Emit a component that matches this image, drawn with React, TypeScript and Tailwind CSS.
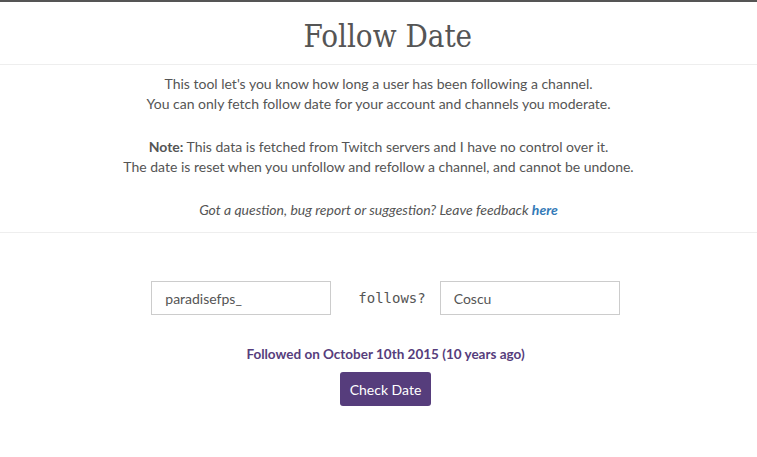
export default function App() {
  return (
    <div className="min-h-[457px] bg-white border-t-2 border-[#555] text-[#555]" style={{ fontFamily: "Lato, 'Open Sans', sans-serif" }}>
      <div className="h-[63px] flex items-center justify-center border-b border-[#eee] pl-[18px] pt-[11px]">
        <h1 className="text-[31px] leading-none text-[#555] pb-1" style={{ fontFamily: "'DejaVu Serif', serif", transform: "scaleX(0.9)" }}>Follow Date</h1>
      </div>
      <div className="text-center text-[14px] leading-[20px] pt-[9px] pb-[12px] border-b border-[#eee]">
        <p>This tool let's you know how long a user has been following a channel.<br />You can only fetch follow date for your account and channels you moderate.</p>
        <p className="mt-[23px]"><b>Note:</b> This data is fetched from Twitch servers and I have no control over it.<br />The date is reset when you unfollow and refollow a channel, and cannot be undone.</p>
        <p className="mt-[23px] italic">Got a question, bug report or suggestion? Leave feedback <a className="font-bold text-[#337ab7]">here</a></p>
      </div>
      <div className="flex flex-col items-center pt-[48px] pl-[14px]">
        <div className="flex items-center">
          <div className="w-[180px] h-[34px] border border-[#ccc] px-[13px] flex items-center text-[14px]">paradisefps_</div>
          <span className="ml-[27px] mr-[14px] text-[14px]" style={{ fontFamily: "'DejaVu Sans Mono', monospace" }}>follows?</span>
          <div className="w-[180px] h-[34px] border border-[#ccc] px-[13px] flex items-center text-[14px]">Coscu</div>
        </div>
        <div className="mt-[29px] text-[13.5px] font-bold text-[#563d7c]">Followed on October 10th 2015 (10 years ago)</div>
        <button className="mt-[8px] bg-[#563d7c] text-white rounded-[3px] px-[10px] h-[34px] text-[14px]">Check Date</button>
      </div>
    </div>
  );
}
